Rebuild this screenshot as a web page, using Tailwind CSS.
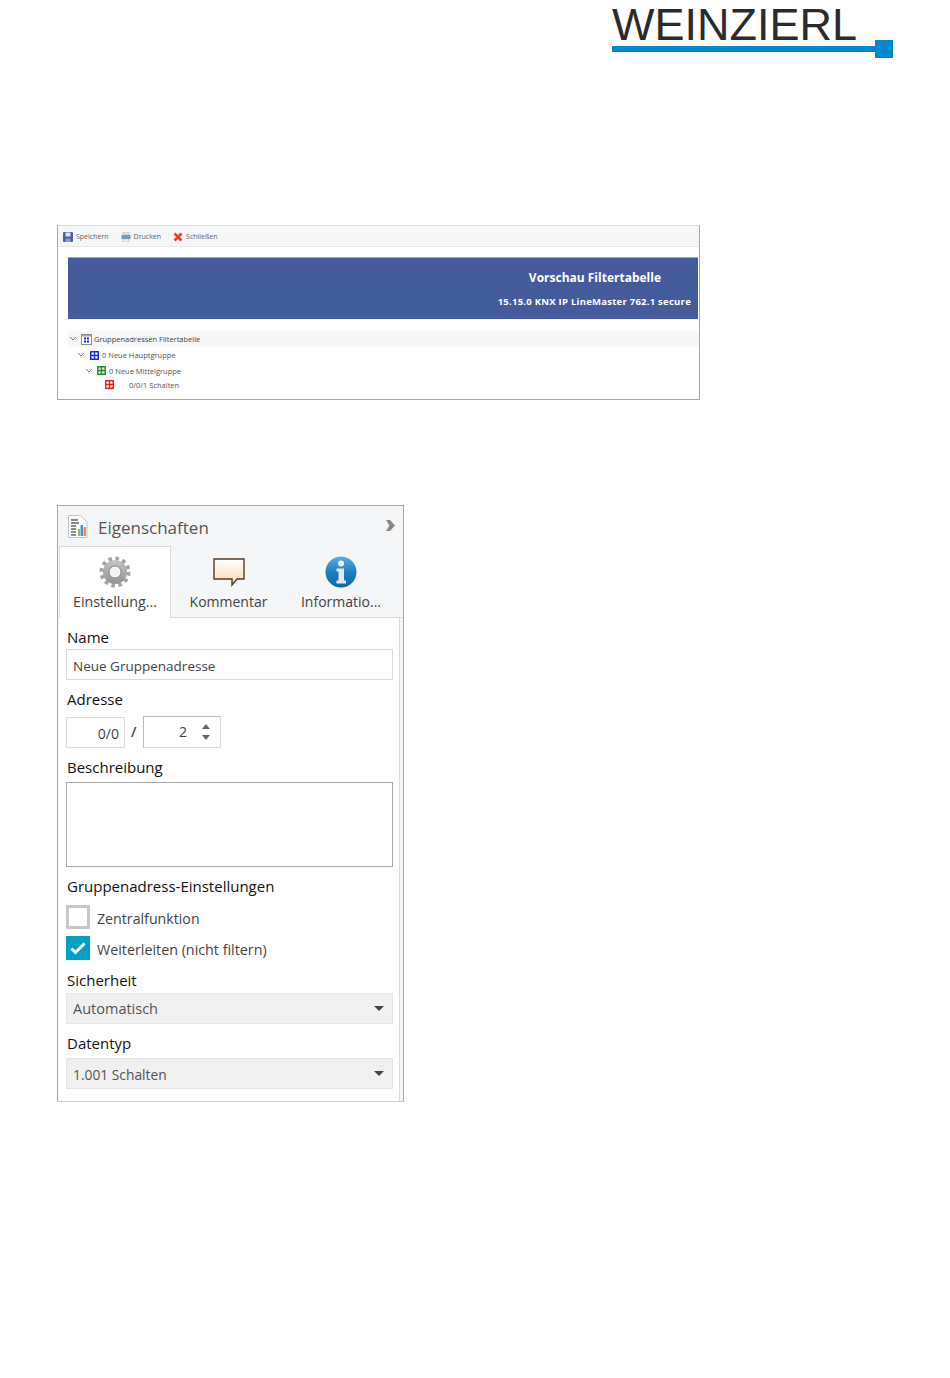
<!DOCTYPE html>
<html lang="de">
<head>
    <meta charset="UTF-8">
    <title>Vorschau Filtertabelle</title>
    <script src="https://cdn.jsdelivr.net/npm/@tailwindcss/browser@4"></script>
</head>
<body class="bg-white font-['Open_Sans',sans-serif] text-[#333]">
<div class="w-[950px] h-[1378px] overflow-hidden">

    <!-- Logo -->
    <div class="h-[225px] pl-[612px] pt-[3px]">
        <div class="font-['Liberation_Sans',sans-serif] text-[45px] leading-[44px] text-[#2b2b2b]">WEINZIERL</div>
        <div class="flex items-center w-[281px] -mt-[7px]">
            <div class="h-[6px] w-[263px] bg-[#0088d0]"></div>
            <div class="h-[18px] w-[18px] bg-[#0088d0]"></div>
        </div>
    </div>

    <!-- Preview -->
    <div class="ml-[57px] w-[643px] h-[175px] border border-[#a8a8a8] border-t-[#dcdcdc] bg-white">
        <div class="h-[21px] bg-[#f5f6f7] border-b border-[#e8e8e8] flex items-center pl-[5px] pt-[2px] text-[7px] text-[#666] gap-[12px]">
            <span class="flex items-center gap-[3px]">
                <svg class="-mt-[1px]" width="10" height="10" viewBox="0 0 10 10"><rect width="10" height="10" rx="1" fill="#4a5fb0"/><rect x="2.500" y="0.500" width="5" height="4" fill="#dfe3f5"/><rect x="2.500" y="6.500" width="5" height="3.500" fill="#8f9ccf"/></svg>
                Speichern
            </span>
            <span class="flex items-center gap-[3px]">
                <svg class="-mt-[1px]" width="10" height="10" viewBox="0 0 10 10"><rect x="2" y="0" width="6" height="3" fill="#e4e4e4" stroke="#aaa" stroke-width=".5"/><rect x="0.500" y="3" width="9" height="4" fill="#6f9cc0"/><rect x="2" y="7" width="6" height="3" fill="#eee" stroke="#aaa" stroke-width=".5"/></svg>
                Drucken
            </span>
            <span class="flex items-center gap-[3px]">
                <svg class="-mt-[1px]" width="10" height="10" viewBox="0 0 10 10"><path d="M1.500 1.500L8.500 8.500M8.500 1.500L1.500 8.500" stroke="#e8401c" stroke-width="2.600"/></svg>
                Schließen
            </span>
        </div>
        <div class="ml-[10px] mt-[10px] mr-[1px] h-[62px] bg-[#445c9b] border-t border-[#9aa5c4] flex flex-col items-end text-white font-bold">
            <div class="mt-[11px] mr-[37px] text-[12px] leading-[18px]">Vorschau Filtertabelle</div>
            <div class="mt-[9px] mr-[7px] text-[9.500px] leading-[12px] tracking-[0.25px]">15.15.0 KNX IP LineMaster 762.1 secure</div>
        </div>
        <div class="ml-[10px] mt-[12px] text-[7.500px] text-[#555]">
            <div class="h-[16px] bg-[#f7f7f7] flex items-center pl-[1px]">
                <svg width="8" height="6" viewBox="0 0 8 6" fill="none" stroke="#777"><path d="M1 1l3 3 3-3"/></svg>
                <svg class="ml-[4px]" width="11" height="11" viewBox="0 0 11 11"><rect x=".5" y=".5" width="10" height="10" fill="#fff" stroke="#8a8a8a"/><rect x="1" y="1" width="9" height="1.500" fill="#c98"/><path d="M3 3.500h2v2H3zM6 3.500h2v2H6zM3 6.500h2v2H3zM6 6.500h2v2H6z" fill="#1a2fd0"/></svg>
                <span class="ml-[2px] pt-[1px] text-[#444]">Gruppenadressen Filtertabelle</span>
            </div>
            <div class="h-[16px] flex items-center pl-[9px]">
                <svg width="8" height="6" viewBox="0 0 8 6" fill="none" stroke="#777"><path d="M1 1l3 3 3-3"/></svg>
                <svg class="ml-[5px]" width="9" height="9" viewBox="0 0 9 9"><rect width="9" height="9" rx=".5" fill="#1a2fd0"/><path d="M1.500 1.500h2.300v2.300H1.500zM5.200 1.500h2.300v2.300H5.200zM1.500 5.200h2.300v2.300H1.500zM5.200 5.200h2.300v2.300H5.200z" fill="#fff"/></svg>
                <span class="ml-[3px] pt-[1px]">0 Neue Hauptgruppe</span>
            </div>
            <div class="h-[15px] flex items-center pl-[17px]">
                <svg width="8" height="6" viewBox="0 0 8 6" fill="none" stroke="#777"><path d="M1 1l3 3 3-3"/></svg>
                <svg class="ml-[4px]" width="9" height="9" viewBox="0 0 9 9"><rect width="9" height="9" rx=".5" fill="#2a8a2a"/><path d="M1.500 1.500h2.300v2.300H1.500zM5.200 1.500h2.300v2.300H5.200zM1.500 5.200h2.300v2.300H1.500zM5.200 5.200h2.300v2.300H5.200z" fill="#e8f4d8"/></svg>
                <span class="ml-[3px] pt-[2px]">0 Neue Mittelgruppe</span>
            </div>
            <div class="h-[13px] flex items-center pl-[37px]">
                <svg width="9" height="9" viewBox="0 0 9 9"><rect width="9" height="9" rx=".5" fill="#ee1c1c"/><path d="M1.500 1.500h2.300v2.300H1.500zM5.200 1.500h2.300v2.300H5.200zM1.500 5.200h2.300v2.300H1.500zM5.200 5.200h2.300v2.300H5.200z" fill="#fff"/></svg>
                <span class="ml-[15px] pt-[2px]">0/0/1 Schalten</span>
            </div>
        </div>
    </div>

    <!-- Properties panel -->
    <div class="mt-[105px] ml-[57px] w-[347px] h-[597px] border border-[#a8a8a8] border-b-[#d0d0d0] bg-[#f5f6f7] flex flex-col">
        <div class="h-[40px] shrink-0 flex items-center pl-[10px] pr-[8px]">
            <svg width="20" height="23" viewBox="0 0 20 23"><path d="M.5.5h12l6.500 6.500v15.500H.5z" fill="#fff" stroke="#c4c4c4"/><path d="M3 5h7M3 8h8M3 11h5M3 14h5M3 17h5M3 20h5" stroke="#666" stroke-width="1.300"/><rect x="10" y="14" width="2" height="7" fill="#8db870"/><rect x="12.500" y="10" width="2.500" height="11" fill="#4a90d0"/><rect x="15.500" y="12" width="2.500" height="9" fill="#e89030"/></svg>
            <span class="ml-[10px] pt-[4px] text-[17px] leading-[24px] text-[#555]">Eigenschaften</span>
            <svg class="ml-auto -mt-[1px]" width="9" height="11" viewBox="0 0 9 11"><path d="M0 0h4l5 5.500L4 11H0l3.500-5.500z" fill="#888"/></svg>
        </div>
        <div class="h-[72px] shrink-0 flex text-[14px] leading-[20px] text-[#444]">
            <div class="ml-[1px] w-[112px] h-[72px] bg-white border border-b-0 border-[#dcdcdc] flex flex-col items-center pt-[9px] relative z-10">
                <svg width="32" height="32" viewBox="0 0 32 32">
                    <defs><linearGradient id="gear" x1="0" y1="0" x2="0" y2="1"><stop offset="0" stop-color="#c4c4c4"/><stop offset="1" stop-color="#929292"/></linearGradient></defs>
                    <circle cx="16" cy="16" r="13.500" fill="none" stroke="#a4a4a4" stroke-width="4" stroke-dasharray="3.500 3.570"/>
                    <circle cx="16" cy="16" r="12" fill="url(#gear)"/>
                    <circle cx="16" cy="16" r="6" fill="#f4f4f4" stroke="#8a8a8a"/>
                </svg>
                <span class="mt-[4px] text-[14.300px]">Einstellung...</span>
            </div>
            <div class="w-[115px] border-b border-[#dcdcdc] flex flex-col items-center pt-[12px]">
                <svg width="32" height="29" viewBox="0 0 32 29"><defs><linearGradient id="bubble" x1="0" y1="0" x2="0" y2="1"><stop offset="0" stop-color="#fff"/><stop offset="1" stop-color="#fbd9ae"/></linearGradient></defs><path d="M1 1h30v20H24l-5 6v-6H1z" fill="url(#bubble)" stroke="#5a3a22" stroke-width="1.400"/></svg>
                <span class="mt-[5px]">Kommentar</span>
            </div>
            <div class="flex-1 pr-[7px] border-b border-[#dcdcdc] flex flex-col items-center pt-[10px]">
                <svg width="32" height="32" viewBox="0 0 32 32">
                    <defs><linearGradient id="info" x1="0" y1="0" x2="0" y2="1"><stop offset="0" stop-color="#5ab0e4"/><stop offset=".5" stop-color="#1b80c0"/><stop offset="1" stop-color="#0f6aa8"/></linearGradient></defs>
                    <circle cx="16" cy="16" r="15.500" fill="url(#info)"/>
                    <circle cx="16" cy="7.500" r="3" fill="#f2f2f2"/>
                    <path d="M11.500 12.500h7.500v12h2v3h-9.500v-3h2v-9h-2z" fill="#e8e8e8"/>
                </svg>
                <span class="mt-[4px]">Informatio...</span>
            </div>
        </div>
        <div class="flex-1 mr-[3px] ml-[1px] bg-white border-r border-[#dcdcdc] px-[7px] text-[15px] leading-[20px] text-[#111]">
            <div class="mt-[9px] pl-[1px] h-[20px]">Name</div>
            <div class="mt-[2px] w-[327px] h-[31px] border border-[#dcdcdc] pl-[6px] text-[13.500px] leading-[32px] text-[#444]">Neue Gruppenadresse</div>

            <div class="mt-[9px] pl-[1px] h-[20px]">Adresse</div>
            <div class="mt-[7px] flex items-center h-[32px] text-[14px] text-[#444]">
                <div class="w-[59px] h-[31px] border border-[#dcdcdc] text-right pr-[5px] leading-[31px]">0/0</div>
                <span class="ml-[6px] w-[12px] font-semibold">/</span>
                <div class="w-[78px] h-[32px] border border-[#dcdcdc] border-t-[#bdbdbd] border-l-[#bdbdbd] flex items-center justify-end pr-[10px]">
                    <span class="mr-[15px]">2</span>
                    <span class="flex flex-col gap-[6px]">
                        <svg class="block" width="8" height="5" viewBox="0 0 8 5"><path d="M4 0l4 5H0z" fill="#666"/></svg>
                        <svg class="block" width="8" height="5" viewBox="0 0 8 5"><path d="M0 0h8L4 5z" fill="#666"/></svg>
                    </span>
                </div>
            </div>

            <div class="mt-[9px] pl-[1px] h-[20px]">Beschreibung</div>
            <div class="mt-[5px] w-[327px] h-[85px] border border-[#a8a8a8] bg-white"></div>

            <div class="mt-[9px] pl-[1px] h-[20px]">Gruppenadress-Einstellungen</div>
            <div class="mt-[9px] flex items-center h-[24px] text-[14.200px] text-[#444]">
                <div class="w-[24px] h-[24px] border-[3px] border-[#c8c8c8] bg-white"></div>
                <span class="ml-[7px] pt-[4px]">Zentralfunktion</span>
            </div>
            <div class="mt-[7px] flex items-center h-[24px] text-[14.300px] text-[#444]">
                <div class="w-[24px] h-[24px] bg-[#009fc4] flex items-center justify-center">
                    <svg width="16" height="13" viewBox="0 0 16 13" fill="none" stroke="#fff" stroke-width="3"><path d="M1.500 6.500l4 4 9-9"/></svg>
                </div>
                <span class="ml-[7px] pt-[4px]">Weiterleiten (nicht filtern)</span>
            </div>

            <div class="mt-[10px] pl-[1px] h-[20px]">Sicherheit</div>
            <div class="mt-[3px] w-[327px] h-[31px] bg-[#f0f0f0] border border-[#e6e6e6] pl-[6px] pr-[8px] flex items-center justify-between text-[14.500px] text-[#555]">
                <span class="pt-[1px]">Automatisch</span>
                <svg width="10" height="5" viewBox="0 0 10 5"><path d="M0 0h10L5 5z" fill="#444"/></svg>
            </div>

            <div class="mt-[9px] pl-[1px] h-[20px]">Datentyp</div>
            <div class="mt-[5px] w-[327px] h-[31px] bg-[#f0f0f0] border border-[#e6e6e6] pl-[6px] pr-[8px] flex items-center justify-between text-[13.800px] text-[#555]">
                <span class="pt-[2px]">1.001 Schalten</span>
                <svg width="10" height="5" viewBox="0 0 10 5"><path d="M0 0h10L5 5z" fill="#444"/></svg>
            </div>
        </div>
    </div>
</div>
</body>
</html>
